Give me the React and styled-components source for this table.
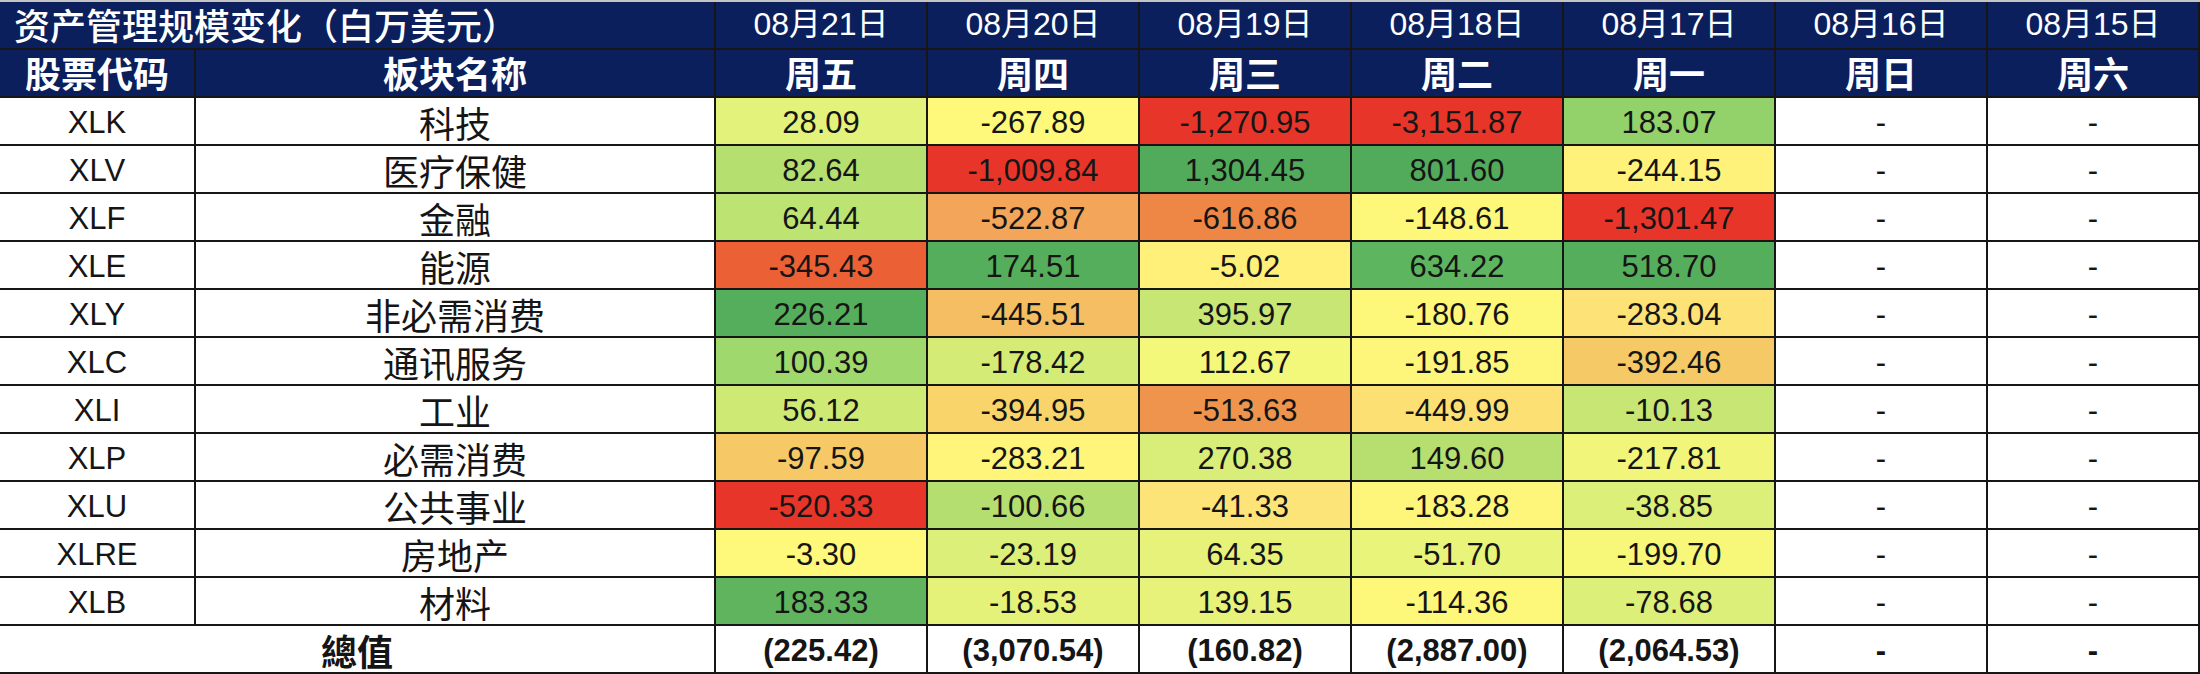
import React from "react";
import styled, { createGlobalStyle } from "styled-components";

const GlobalStyle = createGlobalStyle`
  html, body {
    margin: 0;
    padding: 0;
    background: #ffffff;
  }
  body {
    font-family: "Liberation Sans", "Noto Sans CJK SC", sans-serif;
  }
`;

const NAVY = "#0a1f5c";

const Sheet = styled.div`
  display: grid;
  grid-template-columns: 194px 518px repeat(7, 210px);
  grid-auto-rows: 46px;
  gap: 2px;
  width: 2200px;
  box-sizing: border-box;
  padding: 0 2px 2px 0;
  border-top: 2px solid #c4c4c4;
  background: #161616;
`;

const HeadCell = styled.div`
  grid-column: span ${(p) => p.$span || 1};
  display: flex;
  align-items: center;
  justify-content: ${(p) => (p.$left ? "flex-start" : "center")};
  padding-left: ${(p) => (p.$left ? "14px" : "0")};
  background: ${NAVY};
  color: #ffffff;
  font-size: ${(p) => p.$size || 32}px;
  line-height: 1.1;
  font-weight: ${(p) => p.$weight || 400};
  font-family: ${(p) =>
    p.$han
      ? '"Noto Sans CJK SC", "Liberation Sans", sans-serif'
      : '"Liberation Sans", "Noto Sans CJK SC", sans-serif'};
  white-space: nowrap;
`;

const Cell = styled.div`
  grid-column: span ${(p) => p.$span || 1};
  display: flex;
  align-items: center;
  justify-content: center;
  box-sizing: border-box;
  padding-top: 5px;
  background: ${(p) => p.$bg || "#ffffff"};
  color: #151515;
  font-size: 31px;
  line-height: 1.1;
  font-weight: ${(p) => (p.$bold ? 700 : 400)};
  white-space: nowrap;
`;

const HanCell = styled(Cell)`
  font-family: "Noto Sans CJK SC", "Liberation Sans", sans-serif;
  font-size: 36px;
  line-height: 1.1;
  padding-top: 3px;
`;

const dates = [
  ["08月21日", "周五"],
  ["08月20日", "周四"],
  ["08月19日", "周三"],
  ["08月18日", "周二"],
  ["08月17日", "周一"],
  ["08月16日", "周日"],
  ["08月15日", "周六"],
];

// [ticker, sector, [value, colour] x5]
const rows = [
  ["XLK", "科技", [["28.09", "#e3f27a"], ["-267.89", "#fef97a"], ["-1,270.95", "#e8352a"], ["-3,151.87", "#e8352a"], ["183.07", "#93d16a"]]],
  ["XLV", "医疗保健", [["82.64", "#b5e070"], ["-1,009.84", "#e8352a"], ["1,304.45", "#52ab5a"], ["801.60", "#52ab5a"], ["-244.15", "#fef27a"]]],
  ["XLF", "金融", [["64.44", "#bde373"], ["-522.87", "#f3a65a"], ["-616.86", "#ee8746"], ["-148.61", "#fef87a"], ["-1,301.47", "#e8352a"]]],
  ["XLE", "能源", [["-345.43", "#ec6036"], ["174.51", "#55ae5b"], ["-5.02", "#fff07a"], ["634.22", "#5db65f"], ["518.70", "#55ae5b"]]],
  ["XLY", "非必需消费", [["226.21", "#55ae5b"], ["-445.51", "#f5be63"], ["395.97", "#c8e674"], ["-180.76", "#fef87a"], ["-283.04", "#fde277"]]],
  ["XLC", "通讯服务", [["100.39", "#9fd86c"], ["-178.42", "#d4ec76"], ["112.67", "#f4f87a"], ["-191.85", "#fef67a"], ["-392.46", "#f6c967"]]],
  ["XLI", "工业", [["56.12", "#cfe975"], ["-394.95", "#f9d46b"], ["-513.63", "#ef944c"], ["-449.99", "#fde074"], ["-10.13", "#c8e674"]]],
  ["XLP", "必需消费", [["-97.59", "#f6c966"], ["-283.21", "#fef57a"], ["270.38", "#d9ee78"], ["149.60", "#b6df70"], ["-217.81", "#f1f67a"]]],
  ["XLU", "公共事业", [["-520.33", "#e8352a"], ["-100.66", "#b4de70"], ["-41.33", "#fde478"], ["-183.28", "#fef67a"], ["-38.85", "#dcef78"]]],
  ["XLRE", "房地产", [["-3.30", "#fef97a"], ["-23.19", "#dcef78"], ["64.35", "#e6f27a"], ["-51.70", "#e8f47a"], ["-199.70", "#f7f87a"]]],
  ["XLB", "材料", [["183.33", "#60b45e"], ["-18.53", "#e5f27a"], ["139.15", "#e6f27a"], ["-114.36", "#fef87a"], ["-78.68", "#dcef78"]]],
];

const totals = ["(225.42)", "(3,070.54)", "(160.82)", "(2,887.00)", "(2,064.53)", "-", "-"];

const App = () => {
  return (
    <>
      <GlobalStyle />
      <Sheet>
        <HeadCell $span={2} $left $han $size={36} $weight={500}>
          资产管理规模变化（白万美元）
        </HeadCell>
        {dates.map(([d]) => (
          <HeadCell key={d}>{d}</HeadCell>
        ))}

        <HeadCell $han $weight={700} $size={36}>股票代码</HeadCell>
        <HeadCell $han $weight={700} $size={36}>板块名称</HeadCell>
        {dates.map(([d, w]) => (
          <HeadCell key={w} $han $weight={700} $size={36}>{w}</HeadCell>
        ))}

        {rows.map(([ticker, sector, values]) => (
          <React.Fragment key={ticker}>
            <Cell>{ticker}</Cell>
            <HanCell>{sector}</HanCell>
            {values.map(([v, bg], i) => (
              <Cell key={i} $bg={bg}>{v}</Cell>
            ))}
            <Cell>-</Cell>
            <Cell>-</Cell>
          </React.Fragment>
        ))}

        <HanCell $span={2} $bold>總值</HanCell>
        {totals.map((t, i) => (
          <Cell key={i} $bold>{t}</Cell>
        ))}
      </Sheet>
    </>
  );
};

export default App;
